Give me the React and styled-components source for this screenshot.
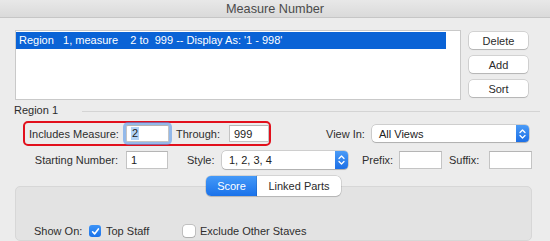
import styled, { createGlobalStyle } from "styled-components";

const GlobalStyle = createGlobalStyle`
  html, body {
    margin: 0;
    padding: 0;
  }
  body {
    background: #ececec;
    font-family: "Liberation Sans", Arial, sans-serif;
    font-size: 11px;
    color: #2b2b2b;
  }
`;

function Stepper() {
  return (
    <StepperBox>
      <svg width="7" height="10" viewBox="0 0 7 10" fill="none">
        <path d="M1 3.5 L3.5 1 L6 3.5" stroke="#fff" strokeWidth="1.3" strokeLinecap="round" strokeLinejoin="round" />
        <path d="M1 6.5 L3.5 9 L6 6.5" stroke="#fff" strokeWidth="1.3" strokeLinecap="round" strokeLinejoin="round" />
      </svg>
    </StepperBox>
  );
}

function Checkbox({ checked }) {
  return (
    <Box $checked={checked}>
      {checked && (
        <svg width="9" height="9" viewBox="0 0 9 9" fill="none">
          <path d="M1.6 4.8 L3.6 6.9 L7.4 1.9" stroke="#fff" strokeWidth="1.6" strokeLinecap="round" strokeLinejoin="round" />
        </svg>
      )}
    </Box>
  );
}

function App() {
  return (
    <Window>
      <GlobalStyle />
      <TitleBar>Measure Number</TitleBar>

      <TopSection>
        <ListBox>
          <SelectedRow>{"Region   1, measure    2 to  999 -- Display As: '1 - 998'"}</SelectedRow>
        </ListBox>
        <ButtonColumn>
          <Button>Delete</Button>
          <Button>Add</Button>
          <Button>Sort</Button>
        </ButtonColumn>
      </TopSection>

      <SectionHeader>
        <span>Region 1</span>
        <Rule />
      </SectionHeader>

      <Row $top={4} $left={23}>
        <HighlightBox>
          <Label $w={89} $right>Includes Measure:</Label>
          <TextField $w={43} $h={17} $ml={8} $focus>
            <Selected>2</Selected>
          </TextField>
          <Label $w={53} $ml={7}>Through:</Label>
          <TextField $w={40} $h={17}>999</TextField>
        </HighlightBox>
        <Label $w={46} $ml={55}>View In:</Label>
        <Select $w={157} $h={17}>
          All Views
          <Stepper />
        </Select>
      </Row>

      <Row $top={5} $left={29}>
        <Label $w={89} $right>Starting Number:</Label>
        <TextField $w={42} $h={18} $ml={8}>1</TextField>
        <Label $w={35} $ml={19}>Style:</Label>
        <Select $w={126} $h={18}>
          1, 2, 3, 4
          <Stepper />
        </Select>
        <Label $w={37} $ml={14}>Prefix:</Label>
        <TextField $w={43} $h={18} />
        <Label $w={40} $ml={7}>Suffix:</Label>
        <TextField $w={43} $h={18} />
      </Row>

      <TabBar>
        <Segment $active $w={51}>Score</Segment>
        <Segment $w={84}>Linked Parts</Segment>
      </TabBar>

      <GroupBox>
        <CheckRow>
          <Label $w={55}>Show On:</Label>
          <CheckItem $w={94}>
            <Checkbox checked />
            Top Staff
          </CheckItem>
          <CheckItem>
            <Checkbox />
            Exclude Other Staves
          </CheckItem>
        </CheckRow>
      </GroupBox>
    </Window>
  );
}

const Window = styled.div`
  width: 550px;
  height: 241px;
  overflow: hidden;
  background: #ececec;
  display: flex;
  flex-direction: column;
`;

const TitleBar = styled.div`
  height: 17px;
  flex-shrink: 0;
  border-bottom: 1px solid #c6c6c6;
  background: linear-gradient(#e8e8e8, #dadada);
  display: flex;
  align-items: center;
  justify-content: center;
  font-size: 12.7px;
  color: #4b4b4b;
`;

const TopSection = styled.div`
  display: flex;
  margin-top: 12px;
  padding-left: 15px;
`;

const ListBox = styled.div`
  width: 446px;
  height: 70px;
  box-sizing: border-box;
  border: 1px solid #c9c9c9;
  background: #fff;
  padding: 1px 14px 0 0;
`;

const SelectedRow = styled.div`
  height: 17px;
  line-height: 17px;
  padding-left: 3px;
  background: #0a63d6;
  color: #fff;
  white-space: pre;
`;

const ButtonColumn = styled.div`
  display: flex;
  flex-direction: column;
  gap: 7px;
  margin: 2px 0 0 8px;
`;

const Button = styled.div`
  width: 59px;
  height: 17px;
  box-sizing: border-box;
  background: #fff;
  border-radius: 4px;
  box-shadow: 0 0 0 0.5px rgba(0, 0, 0, 0.22), 0 1px 1px rgba(0, 0, 0, 0.14);
  display: flex;
  align-items: center;
  justify-content: center;
  color: #2b2b2b;
`;

const SectionHeader = styled.div`
  display: flex;
  align-items: center;
  height: 14px;
  margin-top: 3px;
  padding: 0 10px 0 14px;
  color: #2b2b2b;
`;

const Rule = styled.div`
  flex: 1;
  height: 1px;
  background: #d4d4d4;
  margin: 3px 0 0 24px;
`;

const Row = styled.div`
  display: flex;
  align-items: center;
  margin-top: ${(p) => p.$top}px;
  padding-left: ${(p) => p.$left}px;
`;

const HighlightBox = styled.div`
  display: flex;
  align-items: center;
  height: 25px;
  box-sizing: border-box;
  border: 2px solid #e2101c;
  border-radius: 5px;
  padding-left: 4px;
`;

const Label = styled.span`
  width: ${(p) => p.$w}px;
  flex-shrink: 0;
  margin-left: ${(p) => p.$ml || 0}px;
  text-align: ${(p) => (p.$right ? "right" : "left")};
  white-space: nowrap;
  color: #2e2e2e;
`;

const TextField = styled.div`
  width: ${(p) => p.$w}px;
  height: ${(p) => p.$h}px;
  margin-left: ${(p) => p.$ml || 0}px;
  box-sizing: border-box;
  flex-shrink: 0;
  background: #fff;
  border: 1px solid #c4c4c4;
  border-top-color: #b5b5b5;
  padding-left: 4px;
  display: flex;
  align-items: center;
  color: #222;
  box-shadow: ${(p) => (p.$focus ? "0 0 0 3px rgba(88, 151, 234, 0.6)" : "none")};
  border-radius: ${(p) => (p.$focus ? "2px" : "0")};
`;

const Selected = styled.span`
  background: #b2d3f7;
  padding: 0 1px;
  line-height: 13px;
`;

const Select = styled.div`
  position: relative;
  width: ${(p) => p.$w}px;
  height: ${(p) => p.$h}px;
  box-sizing: border-box;
  flex-shrink: 0;
  background: #fff;
  border-radius: 4px;
  box-shadow: 0 0 0 0.5px rgba(0, 0, 0, 0.25), 0 1px 1px rgba(0, 0, 0, 0.15);
  display: flex;
  align-items: center;
  padding-left: 7px;
  color: #222;
`;

const StepperBox = styled.div`
  position: absolute;
  right: 0;
  top: 0;
  bottom: 0;
  width: 13px;
  border-radius: 0 4px 4px 0;
  background: linear-gradient(#4a9bf7, #1c6fe6);
  display: flex;
  align-items: center;
  justify-content: center;
`;

const TabBar = styled.div`
  display: flex;
  justify-content: center;
  margin: 7px 18px -10px 15px;
  position: relative;
  z-index: 1;
`;

const Segment = styled.div`
  width: ${(p) => p.$w}px;
  height: 20px;
  box-sizing: border-box;
  display: flex;
  align-items: center;
  justify-content: center;
  background: ${(p) => (p.$active ? "linear-gradient(#4499f8, #1a72ea)" : "#fff")};
  color: ${(p) => (p.$active ? "#fff" : "#2b2b2b")};
  box-shadow: 0 0 0 0.5px rgba(0, 0, 0, 0.2), 0 1px 1px rgba(0, 0, 0, 0.12);
  &:first-child {
    border-radius: 5px 0 0 5px;
  }
  &:last-child {
    border-radius: 0 5px 5px 0;
  }
`;

const GroupBox = styled.div`
  flex: 1;
  margin: 0 18px 0 15px;
  background: #e3e3e3;
  border: 1px solid #d7d7d7;
  border-radius: 5px;
  padding: 37px 0 0 18px;
`;

const CheckRow = styled.div`
  display: flex;
  align-items: center;
  height: 14px;
`;

const CheckItem = styled.div`
  display: flex;
  align-items: center;
  gap: 5px;
  width: ${(p) => (p.$w ? `${p.$w}px` : "auto")};
  color: #2e2e2e;
`;

const Box = styled.div`
  width: 12px;
  height: 12px;
  box-sizing: border-box;
  border-radius: 3px;
  display: flex;
  align-items: center;
  justify-content: center;
  background: ${(p) => (p.$checked ? "linear-gradient(#3d94f7, #1a72ea)" : "#fff")};
  box-shadow: ${(p) =>
    p.$checked ? "none" : "0 0 0 0.5px rgba(0, 0, 0, 0.3), 0 1px 1px rgba(0, 0, 0, 0.1)"};
`;

export default App;
